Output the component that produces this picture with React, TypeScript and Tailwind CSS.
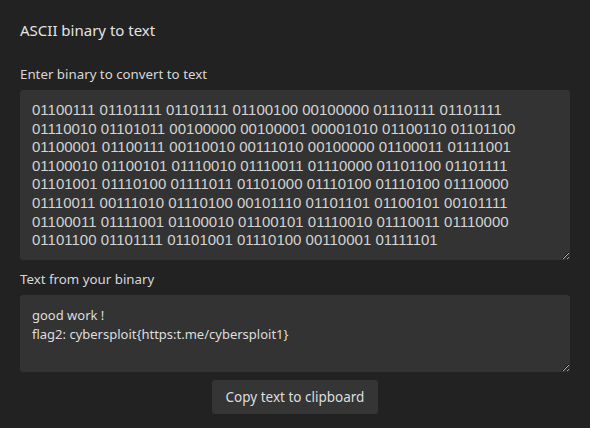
import { useState } from "react";

const BINARY = [
  "01100111 01101111 01101111 01100100 00100000 01110111 01101111",
  "01110010 01101011 00100000 00100001 00001010 01100110 01101100",
  "01100001 01100111 00110010 00111010 00100000 01100011 01111001",
  "01100010 01100101 01110010 01110011 01110000 01101100 01101111",
  "01101001 01110100 01111011 01101000 01110100 01110100 01110000",
  "01110011 00111010 01110100 00101110 01101101 01100101 00101111",
  "01100011 01111001 01100010 01100101 01110010 01110011 01110000",
  "01101100 01101111 01101001 01110100 00110001 01111101",
].join("\n");

function decode(bin: string) {
  return bin
    .trim()
    .split(/\s+/)
    .map((b) => String.fromCharCode(parseInt(b, 2)))
    .join("");
}

export default function App() {
  const [binary, setBinary] = useState(BINARY);
  const text = decode(binary);

  return (
    <div className="min-h-screen w-full bg-[#222222] px-5 pt-[20px] text-[#dcdcdc] font-['Noto_Sans',sans-serif]">
      <h1 className="text-[15px] leading-[20px] text-[#e4e4e4]">ASCII binary to text</h1>

      <label className="mt-[24px] block text-[13.3px] leading-[20px] text-[#d8d8d8]">
        Enter binary to convert to text
      </label>
      <textarea
        value={binary}
        onChange={(e) => setBinary(e.target.value)}
        spellCheck={false}
        className="mt-[6px] block h-[170px] w-full resize-y rounded-[3px] bg-[#333333] px-3 pt-[11px] pb-[6px] text-[15px] leading-[18.6px] text-[#d4d4d4] outline-none font-['Liberation_Sans',Arial,sans-serif]"
      />

      <label className="mt-[9px] block text-[13.3px] leading-[20px] text-[#d8d8d8]">
        Text from your binary
      </label>
      <textarea
        value={text}
        readOnly
        className="mt-[6px] block h-[77px] w-full resize-y rounded-[3px] bg-[#333333] px-3 pt-[11px] pb-[6px] text-[13px] leading-[19px] text-[#dedede] outline-none"
      />

      <div className="mt-[8px] flex justify-center">
        <button
          onClick={() => navigator.clipboard?.writeText(text)}
          className="h-[34px] rounded-[3px] bg-[#353535] px-[14px] text-[13.5px] text-[#dedede]"
        >
          Copy text to clipboard
        </button>
      </div>
    </div>
  );
}
